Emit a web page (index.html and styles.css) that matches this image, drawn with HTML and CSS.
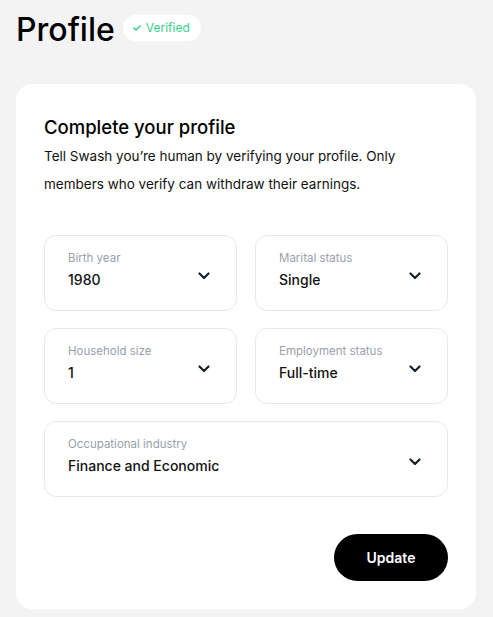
FILE: index.html
```html
<!DOCTYPE html>
<html lang="en">
<head>
<meta charset="utf-8">
<title>Profile</title>
<link rel="stylesheet" href="styles.css">
</head>
<body>
<div class="page">
  <header class="page-header">
    <h1 class="page-title">Profile</h1>
    <span class="badge">
      <svg class="badge-check" width="8" height="8" viewBox="0 0 8 8"><path d="M1 4.2 L3 6 L7 2" fill="none" stroke="#3ccf8e" stroke-width="1.6" stroke-linecap="round" stroke-linejoin="round"/></svg>
      Verified
    </span>
  </header>
  <section class="card">
    <h2 class="card-title">Complete your profile</h2>
    <p class="card-desc">Tell Swash you’re human by verifying your profile. Only members who verify can withdraw their earnings.</p>
    <div class="fields">
      <div class="field">
        <div class="field-text"><span class="field-label">Birth year</span><span class="field-value">1980</span></div>
        <svg class="chev" width="12" height="8" viewBox="0 0 12 8"><path d="M1.5 1.5 L6 6 L10.5 1.5" fill="none" stroke="#14232e" stroke-width="2.2" stroke-linecap="round" stroke-linejoin="round"/></svg>
      </div>
      <div class="field">
        <div class="field-text"><span class="field-label">Marital status</span><span class="field-value">Single</span></div>
        <svg class="chev" width="12" height="8" viewBox="0 0 12 8"><path d="M1.5 1.5 L6 6 L10.5 1.5" fill="none" stroke="#14232e" stroke-width="2.2" stroke-linecap="round" stroke-linejoin="round"/></svg>
      </div>
      <div class="field">
        <div class="field-text"><span class="field-label">Household size</span><span class="field-value">1</span></div>
        <svg class="chev" width="12" height="8" viewBox="0 0 12 8"><path d="M1.5 1.5 L6 6 L10.5 1.5" fill="none" stroke="#14232e" stroke-width="2.2" stroke-linecap="round" stroke-linejoin="round"/></svg>
      </div>
      <div class="field">
        <div class="field-text"><span class="field-label">Employment status</span><span class="field-value">Full-time</span></div>
        <svg class="chev" width="12" height="8" viewBox="0 0 12 8"><path d="M1.5 1.5 L6 6 L10.5 1.5" fill="none" stroke="#14232e" stroke-width="2.2" stroke-linecap="round" stroke-linejoin="round"/></svg>
      </div>
      <div class="field field-wide">
        <div class="field-text"><span class="field-label">Occupational industry</span><span class="field-value">Finance and Economic</span></div>
        <svg class="chev" width="12" height="8" viewBox="0 0 12 8"><path d="M1.5 1.5 L6 6 L10.5 1.5" fill="none" stroke="#14232e" stroke-width="2.2" stroke-linecap="round" stroke-linejoin="round"/></svg>
      </div>
    </div>
    <div class="actions">
      <button class="btn">Update</button>
    </div>
  </section>
</div>
</body>
</html>
```
FILE: styles.css
```css
* { box-sizing: border-box; }
html, body { margin: 0; padding: 0; }
body {
  background: #f3f3f3;
  font-family: Inter, "Noto Sans", sans-serif;
  color: #111;
}
.page {
  padding: 9px 17px 8px 16px;
}
.page-header {
  display: flex;
  align-items: center;
  gap: 8px;
  height: 40px;
}
.page-title {
  margin: 0;
  font-size: 32px;
  font-weight: 500;
  letter-spacing: 0;
  color: #000;
}
.badge {
  display: inline-flex;
  align-items: center;
  gap: 5px;
  background: #fff;
  border-radius: 13px;
  height: 26px;
  padding: 0 11px 0 10px;
  font-size: 12px;
  color: #3ccf8e;
  margin-top: -3px;
}
.card {
  margin-top: 35px;
  background: #fff;
  border-radius: 16px;
  padding: 30px 28px 28px 28px;
}
.card-title {
  margin: 0;
  font-size: 18.5px;
  font-weight: 500;
  line-height: 26px;
  color: #000;
}
.card-desc {
  margin: 2px 0 0 0;
  font-size: 13.5px;
  line-height: 28px;
  color: #111;
}
.fields {
  margin-top: 37px;
  display: grid;
  grid-template-columns: 1fr 1fr;
  gap: 17px 18px;
}
.field {
  height: 76px;
  border: 1px solid #e9e9e9;
  border-radius: 12px;
  display: flex;
  align-items: flex-start;
  justify-content: space-between;
  padding: 15px 26px 0 23px;
}
.field-wide { grid-column: 1 / -1; }
.field-text { display: flex; flex-direction: column; }
.field-label {
  font-size: 11.5px;
  line-height: 15px;
  color: #98a1ad;
}
.field-value {
  margin-top: 4px;
  font-size: 14px;
  line-height: 20px;
  font-weight: 500;
  color: #111;
}
.chev { margin-top: 21px; }
.actions {
  margin-top: 37px;
  display: flex;
  justify-content: flex-end;
}
.btn {
  width: 114px;
  height: 47px;
  border: 0;
  border-radius: 24px;
  background: #000;
  color: #fff;
  font-family: inherit;
  font-size: 14px;
  font-weight: 600;
}
```
